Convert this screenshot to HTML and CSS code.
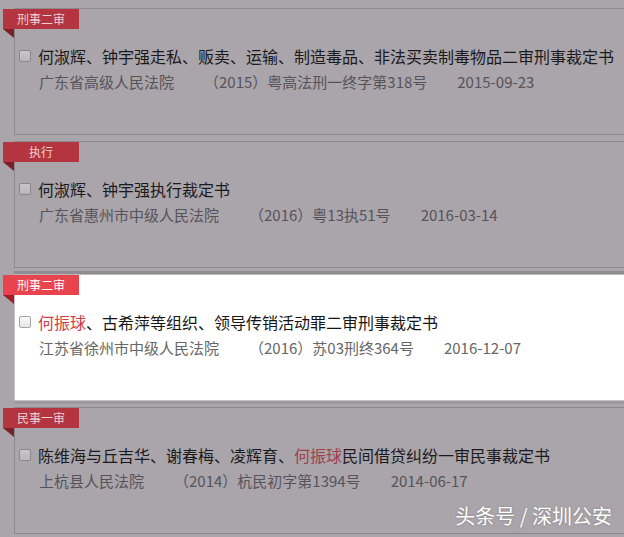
FILE: index.html
```html
<!DOCTYPE html>
<html lang="zh-CN">
<head>
  <meta charset="UTF-8" />
  <meta name="viewport" content="width=device-width, initial-scale=1.0"/>
  <title>裁判文书检索</title>
  <link rel="stylesheet" href="styles.css">
</head>
<body>
  <main class="list">
    <article class="card">
      <span class="tag">刑事二审</span>
      <h3 class="title"><input type="checkbox" class="cb">何淑辉、钟宇强走私、贩卖、运输、制造毒品、非法买卖制毒物品二审刑事裁定书</h3>
      <p class="meta">
        <span>广东省高级人民法院</span>
        <span>（2015）粤高法刑一终字第318号</span>
        <span>2015-09-23</span>
      </p>
    </article>

    <article class="card">
      <span class="tag">执行</span>
      <h3 class="title"><input type="checkbox" class="cb">何淑辉、钟宇强执行裁定书</h3>
      <p class="meta">
        <span>广东省惠州市中级人民法院</span>
        <span>（2016）粤13执51号</span>
        <span>2016-03-14</span>
      </p>
    </article>

    <article class="card focus">
      <span class="tag">刑事二审</span>
      <h3 class="title"><input type="checkbox" class="cb"><em>何振球</em>、古希萍等组织、领导传销活动罪二审刑事裁定书</h3>
      <p class="meta">
        <span>江苏省徐州市中级人民法院</span>
        <span>（2016）苏03刑终364号</span>
        <span>2016-12-07</span>
      </p>
    </article>

    <article class="card">
      <span class="tag">民事一审</span>
      <h3 class="title"><input type="checkbox" class="cb">陈维海与丘吉华、谢春梅、凌辉育、<em>何振球</em>民间借贷纠纷一审民事裁定书</h3>
      <p class="meta">
        <span>上杭县人民法院</span>
        <span>（2014）杭民初字第1394号</span>
        <span>2014-06-17</span>
      </p>
    </article>
  </main>

  <div class="watermark">头条号 / 深圳公安</div>
</body>
</html>
```

FILE: styles.css
```css
html, body {
  height: 537px;
  overflow: hidden;
}

body {
  margin: 0;
  background: #a9a5aa;
  font-family: "Noto Sans CJK SC", "Noto Sans", sans-serif;
  color: #1c1a1d;
  position: relative;
}

.list {
  padding-top: 8px;
}

.card {
  position: relative;
  margin: 0 0 6px 14px;
  height: 127px;
  box-sizing: border-box;
  border: 1px solid #8c898e;
  border-right: none;
  padding: 36px 0 0 4px;
  background: #a9a5aa;
}

.card.focus {
  background: #fff;
  border-color: #c4c2c5;
  border-top-color: #b9b7ba;
  box-shadow: 0 -3px 0 #8f8d91, 0 3px 0 #9c9a9e;
}

.tag {
  position: absolute;
  left: -12px;
  top: 0;
  width: 76px;
  height: 20px;
  line-height: 20px;
  text-align: center;
  font-size: 12px;
  color: #ecd2d5;
  background: #b4353f;
}

.tag::after {
  content: "";
  position: absolute;
  left: 0;
  top: 20px;
  border-top: 9px solid #7b1f28;
  border-left: 11px solid transparent;
}

.focus .tag {
  background: #e9434d;
  color: #fff;
}

.focus .tag::after {
  border-top-color: #a11d28;
}

.title {
  margin: 0;
  display: flex;
  align-items: center;
  font-size: 16px;
  font-weight: normal;
  line-height: 22px;
  white-space: nowrap;
}

.title em {
  font-style: normal;
  color: #a2404e;
}

.focus .title {
  color: #161616;
}

.focus .title em {
  color: #d33c42;
}

.cb {
  appearance: none;
  -webkit-appearance: none;
  margin: 0 7px 0 0;
  width: 12px;
  height: 12px;
  border: 1px solid #8a878c;
  border-radius: 2px;
  background: linear-gradient(#c9c5ca, #b9b5ba);
  flex: none;
}

.focus .cb {
  border-color: #a3a3a3;
  background: linear-gradient(#fafafa, #e6e6e6);
}

.meta {
  margin: 4px 0 0 20px;
  display: flex;
  gap: 30px;
  font-size: 15px;
  line-height: 22px;
  color: #57535a;
  white-space: nowrap;
}

.focus .meta {
  color: #666;
}

.watermark {
  position: absolute;
  right: 12px;
  bottom: 7px;
  font-size: 20px;
  color: #fff;
  text-shadow: 0 0 2px rgba(80, 80, 80, 0.5);
}
```
